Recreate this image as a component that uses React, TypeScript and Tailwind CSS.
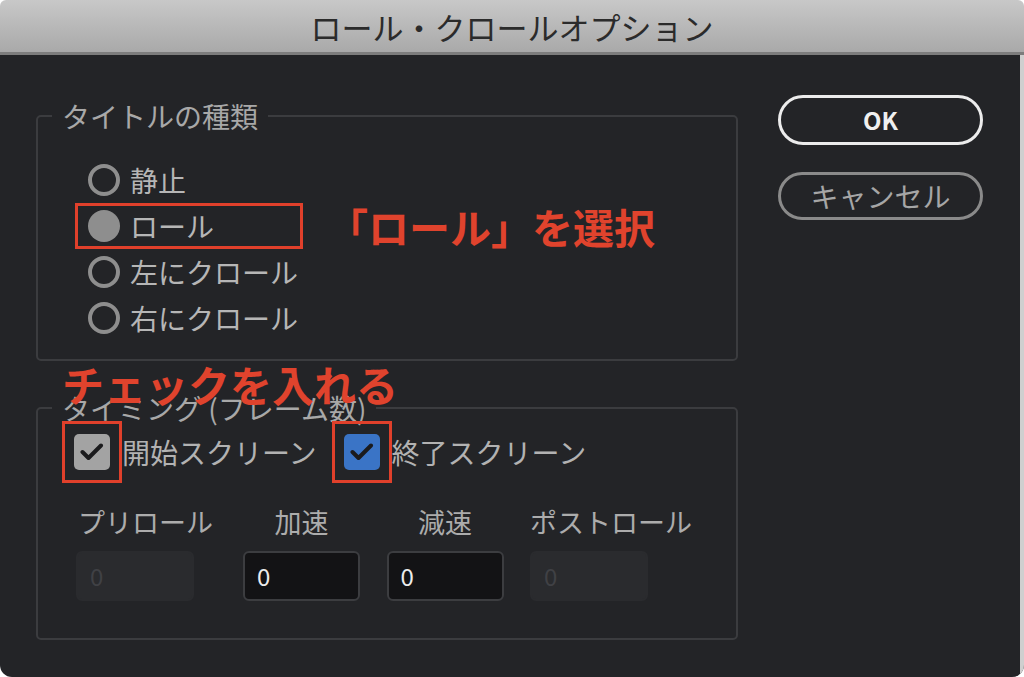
import React from "react";

type RadioProps = {
  label: string;
  checked?: boolean;
  boxed?: boolean;
};

function Radio({ label, checked, boxed }: RadioProps) {
  return (
    <div
      className={`flex h-[46px] w-[228px] items-center gap-[10px] border-[3px] pl-[10px] ${
        boxed ? "border-[#e0402b]" : "border-transparent"
      }`}
    >
      <span
        className={`block h-[32px] w-[32px] shrink-0 rounded-full ${
          checked ? "bg-[#8e8e8e]" : "border-[4px] border-[#8e8e8e]"
        }`}
      />
      <span className="text-[28px] leading-none text-[#b6b6b6]">{label}</span>
    </div>
  );
}

function CheckBox({ blue }: { blue?: boolean }) {
  return (
    <div className="flex h-[62px] w-[60px] shrink-0 items-center justify-center border-[3px] border-[#e0402b]">
      <div
        className={`flex h-[36px] w-[36px] items-center justify-center rounded-[5px] ${
          blue ? "bg-[#3a74c6]" : "bg-[#a3a3a3]"
        }`}
      >
        <svg width="24" height="18" viewBox="0 0 24 18">
          <path
            d="M2.5 9 L8.5 15 L21 2.5"
            fill="none"
            stroke="#1b1b1d"
            strokeWidth="4"
            strokeLinecap="round"
            strokeLinejoin="round"
          />
        </svg>
      </div>
    </div>
  );
}

function NumField({ disabled }: { disabled?: boolean }) {
  return (
    <div
      className={`flex h-[50px] items-center rounded-[6px] pl-[12px] text-[24px] leading-none ${
        disabled
          ? "w-[118px] border-2 border-[#2a2b2e] bg-[#2a2b2e] text-[#404145]"
          : "w-[117px] border-2 border-[#3c3d40] bg-[#131315] text-[#ececec]"
      }`}
    >
      0
    </div>
  );
}

export default function App() {
  return (
    <div className="h-[677px] w-[1024px] overflow-hidden bg-white font-['Noto_Sans_CJK_JP',sans-serif]">
      <div className="flex h-full flex-col overflow-hidden rounded-b-[12px] rounded-t-[6px]">
        {/* title bar */}
        <div className="flex h-[55px] shrink-0 items-center justify-center border-b-[3px] border-[#7d7d7d] bg-gradient-to-b from-[#c8c8c8] to-[#a9a9a9]">
          <span className="text-[31px] leading-none text-[#2b2b2b]">
            ロール・クロールオプション
          </span>
        </div>

        {/* body */}
        <div className="flex flex-1 gap-[40px] border-r-4 border-[#cfcfcf] bg-[#232427] pl-[36px] pt-[40px]">
          <div className="mt-[5px] flex w-[702px] flex-col">
            <fieldset className="w-[702px] rounded-[5px] border-2 border-[#3b3c3f] pb-[18px]">
              <legend className="ml-[14px] px-[10px] text-[28px] leading-[32px] text-[#a8a8a8]">
                タイトルの種類
              </legend>
              <div className="ml-[37px] mt-[25px] flex flex-col">
                <Radio label="静止" />
                <div className="flex items-center">
                  <Radio label="ロール" checked boxed />
                  <span className="ml-[24px] text-[41px] font-bold leading-none text-[#e0432d]">
                    「ロール」を選択
                  </span>
                </div>
                <Radio label="左にクロール" />
                <Radio label="右にクロール" />
              </div>
            </fieldset>

            <div className="relative z-10 -mb-[13px] ml-[26px] mt-[2px] h-[42px] text-[42px] font-bold leading-[42px] text-[#e0432d]">
              チェックを入れる
            </div>

            <fieldset className="w-[702px] rounded-[5px] border-2 border-[#3b3c3f] pb-[37px]">
              <legend className="ml-[14px] px-[10px] text-[28px] leading-[32px] text-[#a8a8a8]">
                タイミング (フレーム数)
              </legend>
              <div className="-mt-[3px] ml-[24px] flex items-center">
                <CheckBox />
                <span className="text-[28px] leading-none text-[#b2b2b2]">
                  開始スクリーン
                </span>
                <div className="ml-[15px]">
                  <CheckBox blue />
                </div>
                <span className="text-[28px] leading-none text-[#b2b2b2]">
                  終了スクリーン
                </span>
              </div>

              <div className="ml-[38px] mt-[22px] flex gap-[27px]">
                <div className="flex w-[140px] flex-col items-start gap-[12px]">
                  <span className="pl-[2px] text-[27px] leading-[34px] text-[#acacac]">
                    プリロール
                  </span>
                  <NumField disabled />
                </div>
                <div className="flex w-[117px] flex-col items-center gap-[12px]">
                  <span className="text-[27px] leading-[34px] text-[#acacac]">加速</span>
                  <NumField />
                </div>
                <div className="flex w-[116px] flex-col items-center gap-[12px]">
                  <span className="text-[27px] leading-[34px] text-[#acacac]">減速</span>
                  <NumField />
                </div>
                <div className="flex w-[168px] flex-col items-start gap-[12px]">
                  <span className="text-[27px] leading-[34px] text-[#acacac]">
                    ポストロール
                  </span>
                  <NumField disabled />
                </div>
              </div>
            </fieldset>
          </div>

          {/* buttons */}
          <div className="flex w-[205px] flex-col gap-[27px]">
            <button className="flex h-[50px] w-[205px] items-center justify-center rounded-full border-[3px] border-[#ececec] text-[24px] font-semibold leading-none text-[#f0f0f0]">
              OK
            </button>
            <button className="flex h-[48px] w-[205px] items-center justify-center rounded-full border-[3px] border-[#8a8a8a] text-[28px] leading-none text-[#a6a6a6]">
              キャンセル
            </button>
          </div>
        </div>
      </div>
    </div>
  );
}
